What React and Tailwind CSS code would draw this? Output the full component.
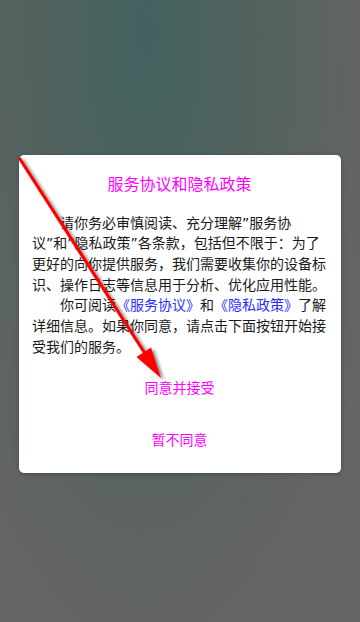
import React from 'react'

const font = { fontFamily: 'Roboto, "Noto Sans CJK SC", sans-serif' }
const bodyFont = { fontFamily: '"DejaVu Sans", "Noto Sans CJK SC", sans-serif' }

const Arrow = () => (
  <svg className="absolute inset-0 pointer-events-none" width="360" height="622" viewBox="0 0 360 622">
    <defs>
      <filter id="sh" x="-20%" y="-20%" width="140%" height="140%">
        <feDropShadow dx="3" dy="2" stdDeviation="1.6" floodColor="#000" floodOpacity="0.45" />
      </filter>
    </defs>
    <g filter="url(#sh)">
      <line x1="20" y1="159" x2="146" y2="355" stroke="#ff0000" strokeWidth="3.2" strokeLinecap="round" />
      <polygon points="161,378 136.5,357 151,347.5" fill="#ff0000" />
    </g>
  </svg>
)

export default function App() {
  return (
    <div
      className="relative w-[360px] h-[622px] overflow-hidden bg-[radial-gradient(ellipse_at_40%_5%,#42625f_0%,#52625f_35%,#636463_75%,#656565_100%)]"
      style={font}
    >
      <div className="pt-[155px] px-[19px]">
        <div className="bg-white rounded-[5px] shadow-[0_1px_4px_rgba(0,0,0,0.25)] pt-[19px] pb-[7px] pl-[13px] pr-[14px]">
          <h2 className="text-center text-[16px] leading-[22px] text-[#ff00ff]">服务协议和隐私政策</h2>
          <div className="mt-[16.6px] text-[14px] leading-[20.7px] text-[#1a1a1a]" style={bodyFont}>
            <p className="indent-[28px]">
              请你务必审慎阅读、充分理解”服务协议”和”隐私政策”各条款，包括但不限于：为了更好的向你提供服务，我们需要收集你的设备标识、操作日志等信息用于分析、优化应用性能。
            </p>
            <p className="indent-[28px]">
              你可阅读<span className="text-[#2b2bff]">《服务协议》</span>和<span className="text-[#2b2bff]">《隐私政策》</span>了解详细信息。如果你同意，请点击下面按钮开始接受我们的服务。
            </p>
          </div>
          <div className="mt-[4.5px] flex flex-col">
            <button className="h-[52px] text-[14px] text-[#ff00ff]">同意并接受</button>
            <button className="h-[52px] text-[14px] text-[#ff00ff]">暂不同意</button>
          </div>
        </div>
      </div>
      <Arrow />
    </div>
  )
}
